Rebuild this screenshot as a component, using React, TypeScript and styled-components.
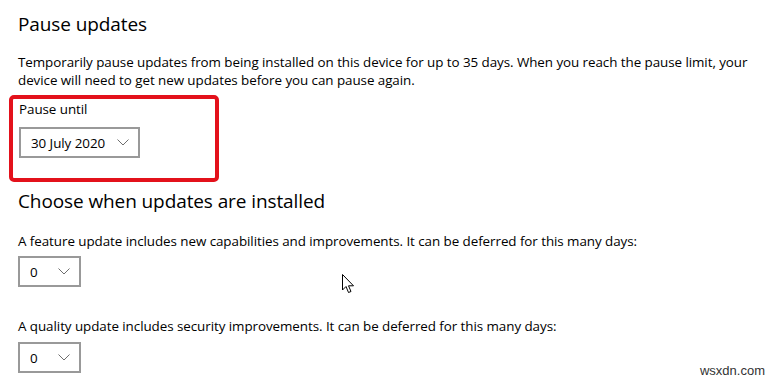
import React from 'react';
import styled, { createGlobalStyle } from 'styled-components';

const GlobalStyle = createGlobalStyle`
  html, body {
    margin: 0;
    padding: 0;
    background: #ffffff;
  }
  body {
    font-family: "Open Sans", "Noto Sans", "Liberation Sans", sans-serif;
    color: #000000;
  }
`;

const Page = styled.div`
  position: relative;
  width: 776px;
  height: 382px;
  overflow: hidden;
  padding-left: 18px;
  box-sizing: border-box;
  display: flex;
  flex-direction: column;
`;

const Heading = styled.h2<{ $top: number }>`
  margin: ${(p) => p.$top}px 0 0 0;
  font-size: 19px;
  font-weight: 400;
  line-height: 26px;
  letter-spacing: -0.1px;
`;

const Text = styled.p<{ $top: number }>`
  margin: ${(p) => p.$top}px 0 0 0;
  font-size: 13.4px;
  line-height: 18px;
  letter-spacing: -0.06px;
  max-width: 745px;
`;

const Highlight = styled.div`
  margin: 6px 0 0 -9px;
  width: 210px;
  box-sizing: border-box;
  border: 4px solid #e3111b;
  border-radius: 5px;
  padding: 1px 0 20px 6px;
  display: flex;
  flex-direction: column;
`;

const Label = styled.div`
  font-size: 13.4px;
  line-height: 18px;
  letter-spacing: -0.06px;
`;

const Select = styled.div<{ $width: number; $top: number }>`
  margin-top: ${(p) => p.$top}px;
  width: ${(p) => p.$width}px;
  height: 31px;
  box-sizing: border-box;
  border: 2px solid #999999;
  display: flex;
  align-items: center;
  justify-content: space-between;
  padding: 0 9px 0 10px;
  font-size: 13.4px;
  letter-spacing: -0.06px;
`;

const Chevron = () => (
  <svg width="12" height="7" viewBox="0 0 12 7" fill="none">
    <path d="M0.5 0.5 L6 6 L11.5 0.5" stroke="#6e6e6e" strokeWidth="1" />
  </svg>
);

const Dropdown = ({ value, width, top }: { value: string; width: number; top: number }) => (
  <Select $width={width} $top={top}>
    <span>{value}</span>
    <Chevron />
  </Select>
);

const Cursor = styled.svg`
  position: absolute;
  left: 342px;
  top: 274px;
`;

const Watermark = styled.div`
  position: absolute;
  right: 11px;
  bottom: 4px;
  font-family: "Liberation Sans", Arial, sans-serif;
  font-size: 13px;
  color: #333333;
`;

export default function App() {
  return (
    <>
      <GlobalStyle />
      <Page>
        <Heading $top={11}>Pause updates</Heading>
        <Text $top={16}>
          Temporarily pause updates from being installed on this device for up to 35 days. When you reach the pause limit, your
          device will need to get new updates before you can pause again.
        </Text>
        <Highlight>
          <Label>Pause until</Label>
          <Dropdown value="30 July 2020" width={121} top={9} />
        </Highlight>
        <Heading $top={6}>Choose when updates are installed</Heading>
        <Text $top={18}>
          A feature update includes new capabilities and improvements. It can be deferred for this many days:
        </Text>
        <Dropdown value="0" width={63} top={6} />
        <Text $top={30}>
          A quality update includes security improvements. It can be deferred for this many days:
        </Text>
        <Dropdown value="0" width={63} top={7} />
        <Cursor width="13" height="20" viewBox="0 0 13 20">
          <path d="M0.5 0.5 L0.5 16 L4 12.5 L6.5 18.5 L9 17.5 L6.5 11.8 L11.5 11.8 Z" fill="#ffffff" stroke="#000000" strokeWidth="1" strokeLinejoin="miter" />
        </Cursor>
        <Watermark>wsxdn.com</Watermark>
      </Page>
    </>
  );
}
